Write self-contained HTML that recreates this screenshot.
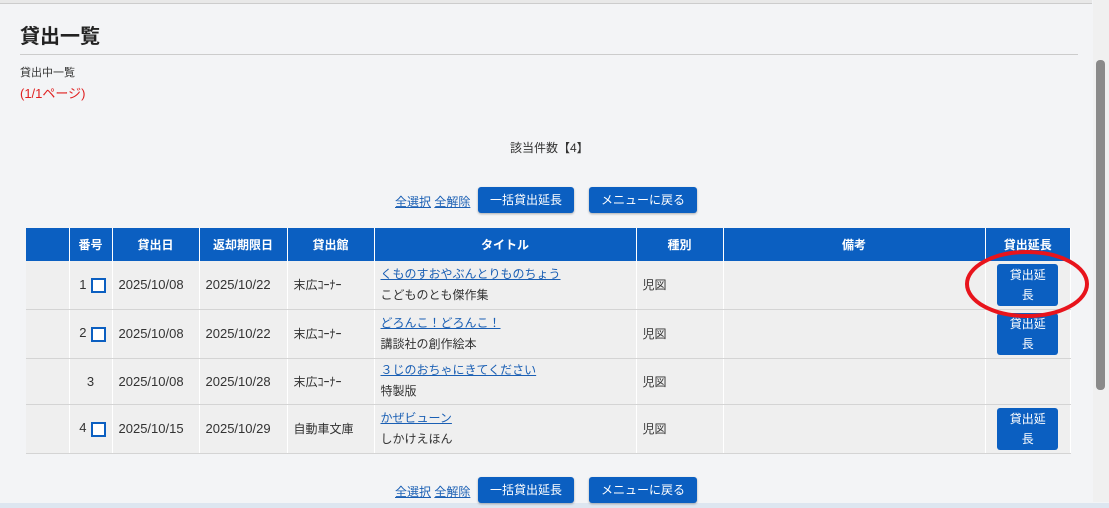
<!DOCTYPE html>
<html><head><meta charset="utf-8"><style>
*{margin:0;padding:0;box-sizing:border-box}
body{width:1109px;height:508px;overflow:hidden;background:#f3f4f6;font-family:"Liberation Sans","Noto Sans CJK JP",sans-serif;font-size:12px;color:#333;position:relative}
.a{position:absolute}
a{color:#1a5fb4;text-decoration:underline}
.btn{position:absolute;background:#0b5fc1;color:#fff;border-radius:3px;font-size:12px;text-align:center;box-shadow:0 1px 2px rgba(0,0,0,.3)}
table{position:absolute;left:26px;top:228px;border-collapse:collapse;width:1045px;font-size:12px}
th{background:#0b5fc1;color:#fff;font-weight:bold;height:33px;border-right:1px solid #fff;text-align:center}
td{background:#efefef;border-bottom:1px solid #d4d4d4;border-right:1px solid #fff;padding:0 6px;vertical-align:middle}
td.n{font-size:13px}
.cb{display:inline-block;width:15px;height:15px;border:2px solid #0b5fc1;background:#fff;vertical-align:middle;margin-left:4px}
.rb{display:block;width:61px;height:42px;background:#0b5fc1;color:#fff;border-radius:3px;text-align:center;line-height:20px;padding-top:1px;margin:0 auto}
</style></head><body>
<div class="a" style="left:0;top:0;width:1092px;height:4px;background:#e8e8e8;border-bottom:1px solid #ccc"></div>
<div class="a" style="left:1093px;top:0;width:16px;height:502px;background:#f0f0f0"></div>
<div class="a" style="left:1096px;top:60px;width:9px;height:330px;background:#8a8a8a;border-radius:4px"></div>
<div class="a" style="left:0;top:503px;width:1109px;height:5px;background:#dde6f0"></div>
<div class="a" style="left:20px;top:20px;font-size:20px;font-weight:bold;color:#222">貸出一覧</div>
<div class="a" style="left:20px;top:54px;width:1058px;height:1px;background:#ccc"></div>
<div class="a" style="left:20px;top:64px;font-size:11px">貸出中一覧</div>
<div class="a" style="left:20px;top:83px;color:#e02020;font-size:13px">(1/1ページ)</div>
<div class="a" style="left:510px;top:139px">該当件数【4】</div>

<div class="a" style="left:395px;top:193px"><a>全選択</a> <a>全解除</a></div>
<div class="btn" style="left:478px;top:187px;width:96px;height:26px;line-height:26px">一括貸出延長</div>
<div class="btn" style="left:589px;top:187px;width:108px;height:26px;line-height:26px">メニューに戻る</div>
<div class="a" style="left:395px;top:483px"><a>全選択</a> <a>全解除</a></div>
<div class="btn" style="left:478px;top:477px;width:96px;height:26px;line-height:26px">一括貸出延長</div>
<div class="btn" style="left:589px;top:477px;width:108px;height:26px;line-height:26px">メニューに戻る</div>

<table>
<tr><th style="width:43px"></th><th style="width:43px">番号</th><th style="width:87px">貸出日</th><th style="width:88px">返却期限日</th><th style="width:87px">貸出館</th><th style="width:262px">タイトル</th><th style="width:87px">種別</th><th style="width:262px">備考</th><th>貸出延長</th></tr>
<tr style="height:48px"><td></td><td class="n" style="text-align:right">1<span class="cb"></span></td><td class="n">2025/10/08</td><td class="n">2025/10/22</td><td>末広ｺｰﾅｰ</td><td style="line-height:21px"><a>くものすおやぶんとりものちょう</a><br>こどものとも傑作集</td><td>児図</td><td></td><td><span class="rb">貸出延<br>長</span></td></tr>
<tr style="height:49px"><td></td><td class="n" style="text-align:right">2<span class="cb"></span></td><td class="n">2025/10/08</td><td class="n">2025/10/22</td><td>末広ｺｰﾅｰ</td><td style="line-height:21px"><a>どろんこ！どろんこ！</a><br>講談社の創作絵本</td><td>児図</td><td></td><td><span class="rb">貸出延<br>長</span></td></tr>
<tr style="height:46px"><td></td><td class="n" style="text-align:center">3</td><td class="n">2025/10/08</td><td class="n">2025/10/28</td><td>末広ｺｰﾅｰ</td><td style="line-height:21px"><a>３じのおちゃにきてください</a><br>特製版</td><td>児図</td><td></td><td></td></tr>
<tr style="height:49px"><td></td><td class="n" style="text-align:right">4<span class="cb"></span></td><td class="n">2025/10/15</td><td class="n">2025/10/29</td><td>自動車文庫</td><td style="line-height:21px"><a>かぜビューン</a><br>しかけえほん</td><td>児図</td><td></td><td><span class="rb">貸出延<br>長</span></td></tr>
</table>
<svg class="a" style="left:0;top:0" width="1109" height="508"><ellipse cx="1027" cy="284" rx="60" ry="32" fill="none" stroke="#e8141c" stroke-width="4"/></svg>
</body></html>
